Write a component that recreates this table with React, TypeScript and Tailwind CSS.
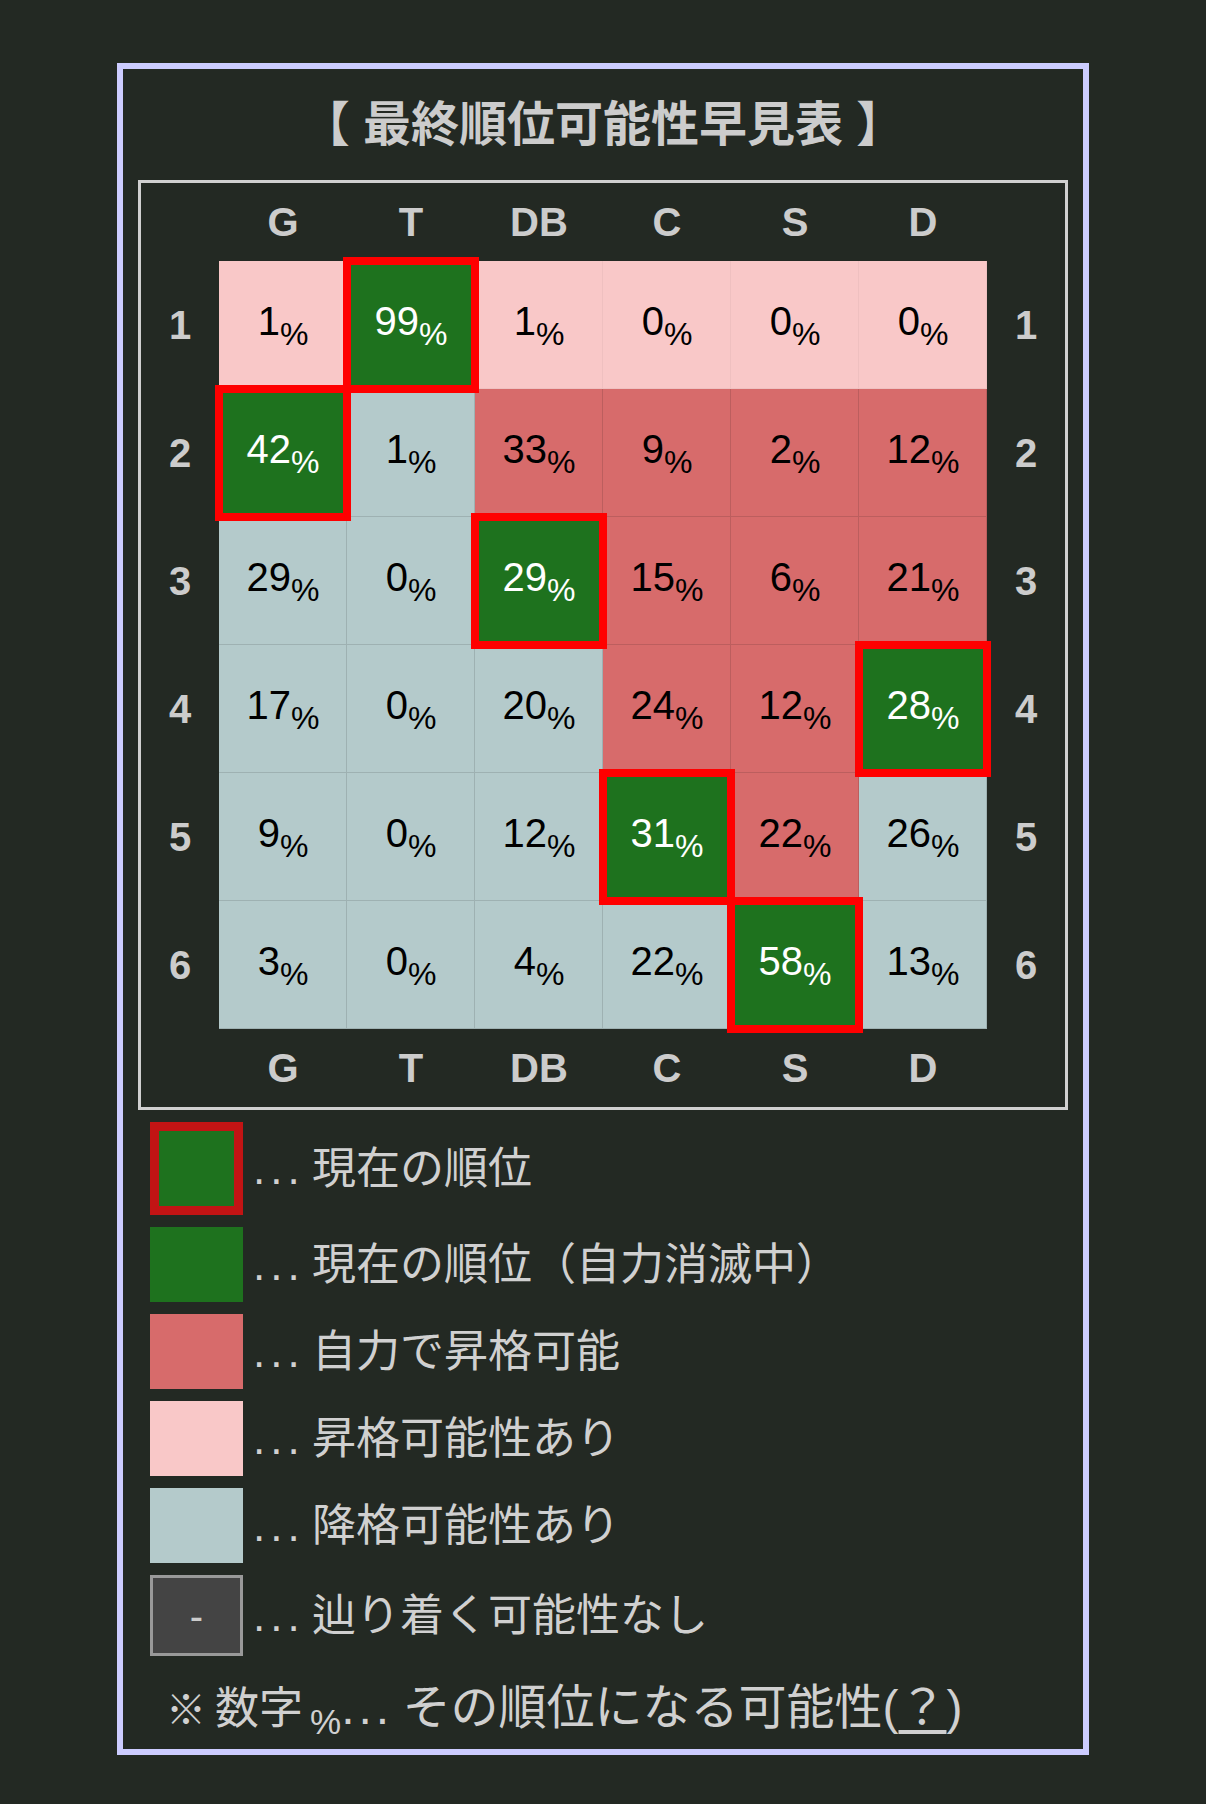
import React from 'react';

type Kind = 'p' | 'r' | 'b' | 'g';

const cols = ['G', 'T', 'DB', 'C', 'S', 'D'];

const rows: [number, Kind][][] = [
  [[1, 'p'], [99, 'g'], [1, 'p'], [0, 'p'], [0, 'p'], [0, 'p']],
  [[42, 'g'], [1, 'b'], [33, 'r'], [9, 'r'], [2, 'r'], [12, 'r']],
  [[29, 'b'], [0, 'b'], [29, 'g'], [15, 'r'], [6, 'r'], [21, 'r']],
  [[17, 'b'], [0, 'b'], [20, 'b'], [24, 'r'], [12, 'r'], [28, 'g']],
  [[9, 'b'], [0, 'b'], [12, 'b'], [31, 'g'], [22, 'r'], [26, 'b']],
  [[3, 'b'], [0, 'b'], [4, 'b'], [22, 'b'], [58, 'g'], [13, 'b']],
];

const bg: Record<Kind, string> = {
  p: 'bg-[#f9c8c8] text-black shadow-[inset_-1px_-1px_0_rgba(0,0,0,0.04)]',
  r: 'bg-[#d76b6b] text-black shadow-[inset_-1px_-1px_0_rgba(0,0,0,0.12)]',
  b: 'bg-[#b4cacb] text-black shadow-[inset_-1px_-1px_0_rgba(0,0,0,0.12)]',
  g: 'bg-[#1e721e] text-white z-10 outline-8 outline-[#ff0000] -outline-offset-4',
};

function Label({ children }: { children: React.ReactNode }) {
  return (
    <div className="flex items-center justify-center text-[40px] font-bold text-[#cccccc] font-['Liberation_Sans',sans-serif]">
      {children}
    </div>
  );
}

function Cell({ v, k }: { v: number; k: Kind }) {
  return (
    <div className={`relative flex items-center justify-center font-['Liberation_Sans',sans-serif] ${bg[k]}`}>
      <span className="text-[40px] leading-none">
        {v}
        <span className="text-[32px] align-[-10px]">%</span>
      </span>
    </div>
  );
}

// "..." with the wider dot spacing of the original
function Dots() {
  return (
    <>
      <span className="tracking-[5px]">..</span>.
    </>
  );
}

function LegendRow({ swatch, text }: { swatch: React.ReactNode; text: string }) {
  return (
    <div className="flex items-center">
      {swatch}
      <span className="ml-[10px] text-[44px] text-[#d0d0d0] whitespace-nowrap">
        <Dots /> {text}
      </span>
    </div>
  );
}

export default function App() {
  return (
    <div className="min-h-[1804px] bg-[#232923] pt-[63px] pb-[49px] font-['Liberation_Sans','Noto_Sans_CJK_JP',sans-serif]">
      <div className="mx-auto w-[972px] h-[1692px] border-[6px] border-[#ccccff] flex flex-col">
        {/* title */}
        <h1 className="h-[111px] flex items-center justify-center text-[48px] font-bold text-[#cccccc]">
          【 最終順位可能性早見表 】
        </h1>

        {/* table */}
        <div className="mx-[15px] border-[3px] border-[#d0d0d0] grid grid-cols-[78px_repeat(6,128px)_78px] grid-rows-[78px_repeat(6,128px)_78px]">
          <div />
          {cols.map(c => <Label key={'t' + c}>{c}</Label>)}
          <div />
          {rows.map((row, i) => (
            <React.Fragment key={i}>
              <Label>{i + 1}</Label>
              {row.map(([v, k], j) => <Cell key={j} v={v} k={k} />)}
              <Label>{i + 1}</Label>
            </React.Fragment>
          ))}
          <div />
          {cols.map(c => <Label key={'b' + c}>{c}</Label>)}
          <div />
        </div>

        {/* legend */}
        <div className="mt-[12px] pl-[27px] flex flex-col gap-[12px]">
          <LegendRow
            swatch={<div className="w-[93px] h-[93px] border-[9px] border-[#c21414] bg-[#1e721e]" />}
            text="現在の順位"
          />
          <LegendRow swatch={<div className="w-[93px] h-[75px] bg-[#1e721e]" />} text="現在の順位（自力消滅中）" />
          <LegendRow swatch={<div className="w-[93px] h-[75px] bg-[#d76b6b]" />} text="自力で昇格可能" />
          <LegendRow swatch={<div className="w-[93px] h-[75px] bg-[#f9c8c8]" />} text="昇格可能性あり" />
          <LegendRow swatch={<div className="w-[93px] h-[75px] bg-[#b4cacb]" />} text="降格可能性あり" />
          <LegendRow
            swatch={
              <div className="w-[93px] h-[81px] border-[3px] border-[#999999] bg-[#444444] flex items-center justify-center text-[40px] text-[#cccccc]">
                -
              </div>
            }
            text="辿り着く可能性なし"
          />
        </div>

        {/* footnote */}
        <p className="mt-[22px] pl-[43px] h-[60px] leading-[60px] text-[48px] text-[#d0d0d0] whitespace-nowrap">
          <span className="text-[40px]">※</span>
          <span className="ml-[9px] text-[44px]">数字</span>
          <span className="ml-[7px] text-[35px] align-[-10px]">%</span>
          <span className="tracking-[4px]">..</span>. その順位になる可能性(<span className="underline underline-offset-[6px]">？</span>)
        </p>
      </div>
    </div>
  );
}
